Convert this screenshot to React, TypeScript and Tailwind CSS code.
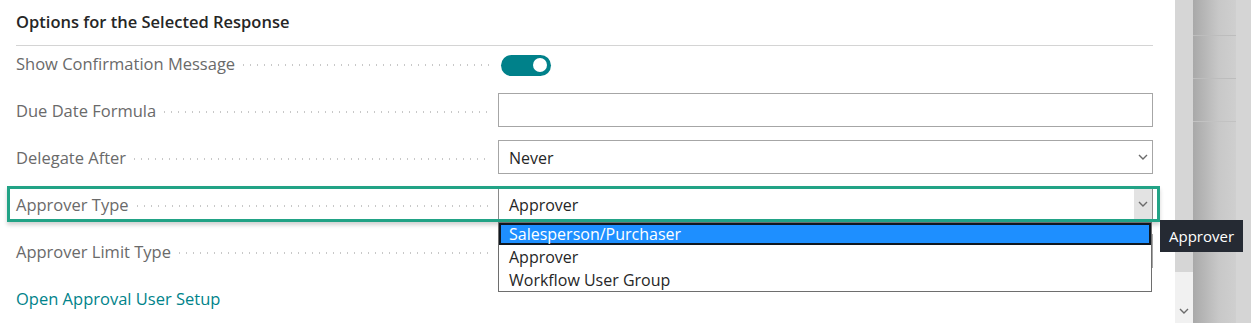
import React from "react";

const font = { fontFamily: '"Open Sans", "Noto Sans", sans-serif' };

function Chevron({ className = "" }: { className?: string }) {
  return (
    <svg viewBox="0 0 10 6" className={`h-[6px] w-[10px] ${className}`} fill="none">
      <path d="M1 1l4 4 4-4" stroke="#6b6b6b" strokeWidth="1.4" />
    </svg>
  );
}

function Label({ text }: { text: string }) {
  return (
    <div className="flex w-[482px] shrink-0 items-center gap-2 pr-2 pt-[3px]">
      <span className="whitespace-nowrap text-[16.5px] text-[#6a6a6a]">{text}</span>
      <div className="h-[2px] flex-1 bg-[linear-gradient(to_right,#c8c8c8_1.5px,transparent_1.5px)] bg-[length:7px_2px] bg-repeat-x" />
    </div>
  );
}

function Row({ label, children }: { label: string; children?: React.ReactNode }) {
  return (
    <div className="flex h-[34px] items-center">
      <Label text={label} />
      <div className="flex h-full flex-1 items-center">{children}</div>
    </div>
  );
}

function Select({ value, active }: { value: string; active?: boolean }) {
  return (
    <div
      className={`flex h-full flex-1 items-center border ${
        active ? "border-[#8a8a8a]" : "border-[#a6a6a6]"
      } bg-white pl-[10px]`}
    >
      <span className="flex-1 pt-[2px] text-[16px] text-[#262626]">{value}</span>
      <div className={`flex h-full w-[18px] items-center justify-center ${active ? "bg-[#e3e3e3]" : ""}`}>
        <Chevron />
      </div>
    </div>
  );
}

export default function App() {
  return (
    <div className="relative flex h-[323px] w-[1251px] overflow-hidden bg-white" style={font}>
      {/* Main panel */}
      <div className="w-[1175px] shrink-0 bg-white pl-4 pr-[22px]">
        <div className="flex h-[46px] items-center border-b border-[#d4d4d4]">
          <h2 className="text-[16.5px] font-semibold text-[#262626]">Options for the Selected Response</h2>
        </div>

        <div className="flex flex-col gap-[13px]">
          <Row label="Show Confirmation Message">
            <div className="ml-[3px] mt-[4px] flex h-[21px] w-[50px] items-center justify-end rounded-full bg-[#00818a] pr-[4px]">
              <div className="h-[14px] w-[14px] rounded-full bg-white" />
            </div>
          </Row>
          <Row label="Due Date Formula">
            <div className="h-full flex-1 border border-[#a6a6a6] bg-white" />
          </Row>
          <Row label="Delegate After">
            <Select value="Never" />
          </Row>

          {/* Approver Type with highlight */}
          <div className="relative">
            <Row label="Approver Type">
              <Select value="Approver" active />
            </Row>
            <div className="pointer-events-none absolute -left-[9px] -right-[7px] -top-[1px] -bottom-[1px] border-[3px] border-[#22a386] shadow-[0_3px_4px_rgba(0,0,0,0.18)]" />
            {/* dropdown list */}
            <div className="absolute left-[482px] right-[1px] top-[35px] z-10 flex flex-col border border-[#6e6e6e] bg-white text-[16px] text-[#262626]">
              <div className="flex h-[22px] items-center border-2 border-[#101820] bg-[#1e8fff] pl-[8px] text-white">
                Salesperson/Purchaser
              </div>
              <div className="flex h-[23px] items-center pl-[10px]">Approver</div>
              <div className="flex h-[23px] items-center pl-[10px]">Workflow User Group</div>
            </div>
          </div>

          <Row label="Approver Limit Type">
            <Select value="" />
          </Row>

          <div className="flex h-[34px] items-center pt-[2px]">
            <a className="text-[16.5px] text-[#00838a]">Open Approval User Setup</a>
          </div>
        </div>
      </div>

      {/* Scrollbar */}
      <div className="flex w-[18px] shrink-0 flex-col">
        <div className="flex-1 bg-[#d6d6d6]" />
        <div className="flex h-[51px] items-end justify-center bg-[#f1f1f1] pb-[9px]">
          <Chevron />
        </div>
      </div>

      {/* Shaded background area */}
      <div className="flex flex-1">
        <div className="flex w-[43px] flex-col bg-[linear-gradient(to_right,#a9a9a9,#c8c8c8_60%,#cfcfcf)] pt-[35px]">
          <div className="h-[43px] border-t border-[#bdbdbd]" />
          <div className="h-[43px] border-t border-[#bdbdbd]" />
          <div className="h-[43px] border-t border-[#c2c2c2]" />
        </div>
        <div className="flex-1 bg-[#d5d5d5]" />
      </div>

      {/* Tooltip */}
      <div className="absolute left-[1160px] top-[220px] flex h-[32px] w-[83px] items-center justify-center bg-[#252a33] text-[15px] text-white">
        Approver
      </div>
    </div>
  );
}
